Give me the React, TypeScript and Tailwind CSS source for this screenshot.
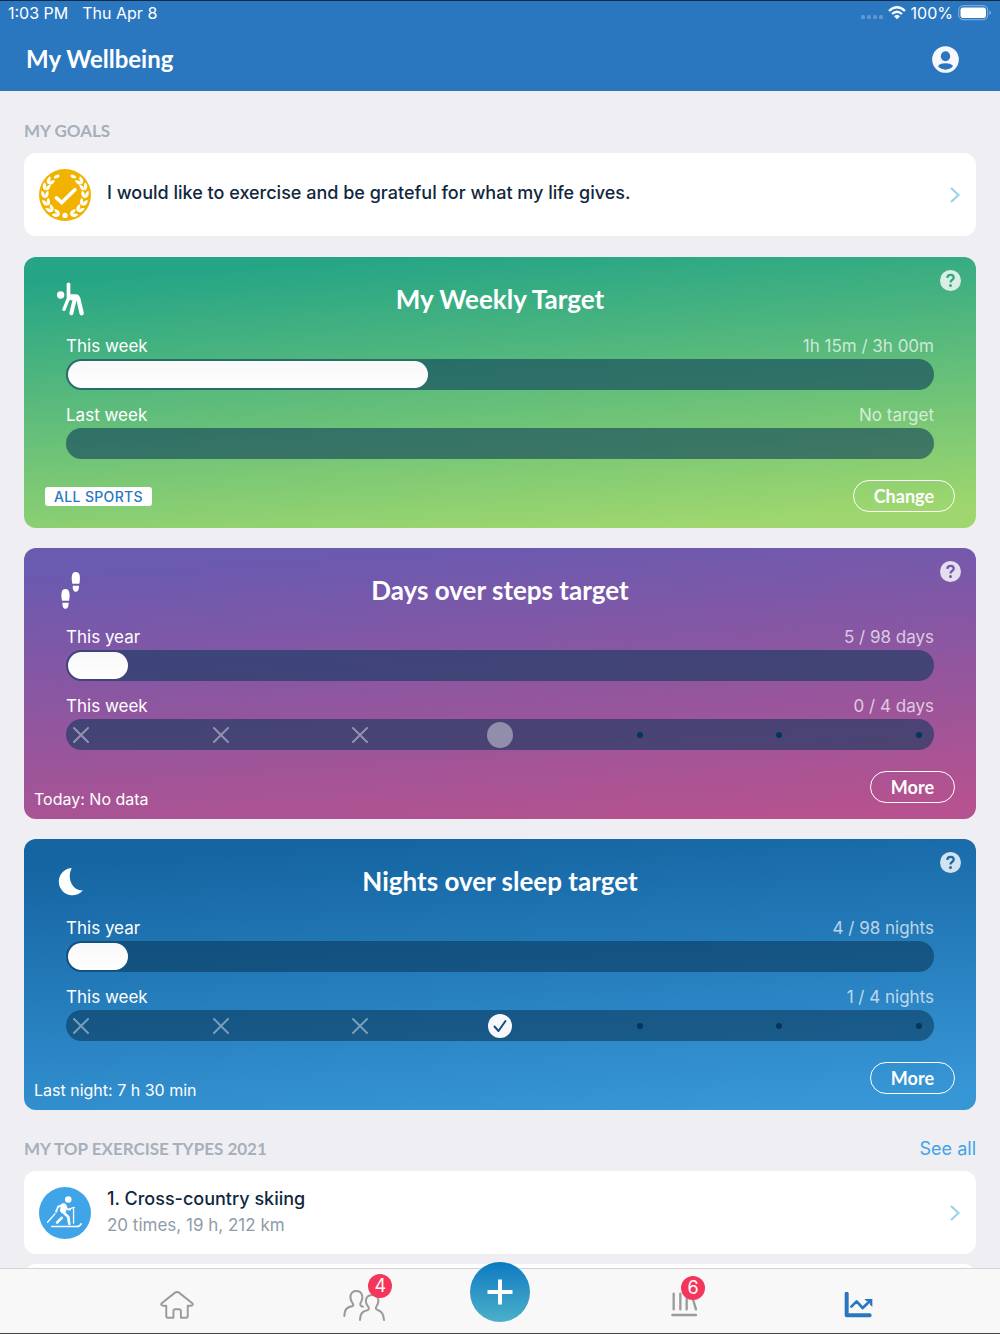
import type { ReactNode } from 'react';

type Day = 'missed' | 'today' | 'done' | 'upcoming';

interface Row {
  label: string;
  value: string;
  progress?: number;
  days?: Day[];
}

interface TargetCardProps {
  title: string;
  icon: ReactNode;
  gradient: string;
  helpColor: string;
  rows: Row[];
  note: ReactNode;
  action: string;
}

function SignalDots() {
  return (
    <svg className="mt-2" width="22" height="5" viewBox="0 0 22 5" fill="#fff" opacity="0.25">
      <rect x="0" y="0" width="4" height="4" rx="1.5" />
      <rect x="6" y="0" width="4" height="4" rx="1.5" />
      <rect x="12" y="0" width="4" height="4" rx="1.5" />
      <rect x="18" y="0" width="4" height="4" rx="1.5" />
    </svg>
  );
}

function WifiIcon() {
  return (
    <svg width="18" height="14" viewBox="0 0 54 42" fill="none" stroke="#fff">
      <path d="M3 15 Q27 -7 51 15" strokeWidth="7" />
      <path d="M12 24 Q27 10 42 24" strokeWidth="7" />
      <path d="M18 31 Q27 22 36 31 L27 40 Z" fill="#fff" stroke="none" />
    </svg>
  );
}

function BatteryIcon() {
  return (
    <svg width="34" height="16" viewBox="0 0 34 16">
      <rect x="0.7" y="0.7" width="29" height="14" rx="4.5" fill="none" stroke="#fff" strokeOpacity="0.45" />
      <rect x="2.5" y="2.5" width="25.5" height="10.5" rx="2.8" fill="#fff" />
      <path d="M31.5 5.2 Q34 7.7 31.5 10.2 Z" fill="#fff" fillOpacity="0.5" />
    </svg>
  );
}

function AccountIcon() {
  return (
    <svg width="27" height="27" viewBox="0 0 81 81">
      <circle cx="40.5" cy="40.5" r="40" fill="#f8f8fc" />
      <ellipse cx="40.5" cy="31" rx="14" ry="15" fill="#2a77c0" />
      <path d="M18 61 Q22 52 40.5 52 Q59 52 63 61 Q54 71 40.5 71 Q27 71 18 61 Z" fill="#2a77c0" />
    </svg>
  );
}

function LaurelHalf() {
  const pairs = [
    [91, 180, 42],
    [79, 197, 22],
    [75, 220, 0],
    [80, 244, -22],
    [91, 264, -42],
    [110, 278, -65],
  ];
  return (
    <g>
      <ellipse cx="111" cy="166" rx="9" ry="5" transform="rotate(-22 111 166)" />
      {pairs.map(([x, y, angle]) => (
        <g key={y} transform={`translate(${x} ${y}) rotate(${angle})`}>
          <path d="M0 11 C-11 9 -13 -1 -10 -11 C-2 -8 1 0 0 11 Z" />
          <path d="M0 11 C11 9 13 -1 10 -11 C2 -8 -1 0 0 11 Z" />
        </g>
      ))}
    </g>
  );
}

function GoalIcon() {
  return (
    <svg className="size-[52px] shrink-0" viewBox="57 143 158 158" fill="#fff">
      <circle cx="136" cy="222" r="79" fill="#f2b200" />
      <LaurelHalf />
      <g transform="translate(272 0) scale(-1 1)">
        <LaurelHalf />
      </g>
      <circle cx="136" cy="284" r="8" />
      <path d="M110 231 L126 245 L166 206" fill="none" stroke="#fff" strokeWidth="11" strokeLinecap="round" />
    </svg>
  );
}

function SkiIcon() {
  return (
    <svg className="size-[52px] shrink-0" viewBox="57 168 158 158" fill="none" stroke="#fff" strokeLinecap="round" strokeLinejoin="round">
      <circle cx="136" cy="247" r="79" fill="#3fa4e8" stroke="none" />
      <circle cx="146" cy="206" r="10" fill="#fff" stroke="none" />
      <path d="M128 223 L115 228 L109 243" strokeWidth="6" />
      <path d="M137 224 L143 236 L152 237" strokeWidth="5" />
      <path d="M126 220 Q134 216 139 222 L138 243 L126 246 Q120 243 123 234 Z" fill="#fff" strokeWidth="3" />
      <path d="M130 244 L146 259 L149 280" strokeWidth="8" />
      <path d="M126 262 L112 276" strokeWidth="8" />
      <path d="M106 249 L83 275" strokeWidth="4" />
      <path d="M147 235 L164 230 M162 231 V278" strokeWidth="4" />
      <path d="M96 288 H172 Q181 288 185 280" strokeWidth="5" />
    </svg>
  );
}

function StretchIcon() {
  return (
    <svg className="h-9 w-[30px]" viewBox="108 92 90 108" fill="none" stroke="#fff" strokeLinecap="round" strokeLinejoin="round">
      <circle cx="122" cy="134" r="11" fill="#fff" stroke="none" />
      <path d="M145.5 102 V140" strokeWidth="11" />
      <path d="M146 142 L132 177" strokeWidth="10" />
      <path d="M147 138 H167 Q173 138 175 146 L185 189" strokeWidth="13" />
      <path d="M165 144 L154 189" strokeWidth="12" />
      <path d="M144 134 H170 L173 150 H146 Z" fill="#fff" stroke="none" />
    </svg>
  );
}

function StepsIcon() {
  return (
    <svg className="h-9 w-[30px] overflow-visible" viewBox="108 96 90 108" fill="#fff">
      <path d="M157 131 C153 110 155 96 167 96 C180 96 182 110 178 131 Z" />
      <path d="M158 137 H177 C177 149 174 155 167 155 C161 155 158 149 158 137 Z" />
      <path d="M126 182 C122 161 124 147 136 147 C149 147 151 161 147 182 Z" />
      <path d="M127 188 H146 C146 200 143 206 136 206 C130 206 127 200 127 188 Z" />
    </svg>
  );
}

function MoonIcon() {
  return (
    <svg className="h-9 w-[30px]" viewBox="106 98 90 108" fill="#fff">
      <path d="M153 113 A41 41 0 1 0 187 180 C160 184 136 150 153 113 Z" />
    </svg>
  );
}

function Chevron() {
  return (
    <svg className="shrink-0" width="12" height="18" viewBox="0 0 12 18" fill="none" stroke="#9fd0f2" strokeWidth="2.2">
      <path d="M2 2 L9.5 9 L2 16" />
    </svg>
  );
}

function DayMark({ day }: { day: Day }) {
  if (day === 'missed') {
    return (
      <svg width="16" height="16" viewBox="0 0 16 16" stroke="#fff" strokeOpacity="0.42" strokeWidth="2" strokeLinecap="round">
        <path d="M1 1 L15 15 M15 1 L1 15" />
      </svg>
    );
  }
  if (day === 'today') {
    return <span className="size-[26px] rounded-full bg-white/40" />;
  }
  if (day === 'done') {
    return (
      <svg width="24" height="24" viewBox="0 0 24 24">
        <circle cx="12" cy="12" r="12" fill="#f8f8fc" />
        <path d="M6.5 12.5 L10.5 17 L17.5 7" fill="none" stroke="#12507f" strokeWidth="2" strokeLinecap="round" strokeLinejoin="round" />
      </svg>
    );
  }
  return <span className="size-[6px] rounded-full bg-[#04365a]" />;
}

function TargetRow({ label, value, progress, days }: Row) {
  return (
    <div>
      <div className="flex justify-between text-[17px] leading-6">
        <span>{label}</span>
        <span className="text-white/70">{value}</span>
      </div>
      <div className="mt-px flex h-[31px] items-center rounded-full bg-[#093758]/57">
        {progress !== undefined && (
          <div className="h-full w-full p-[2px]">
            <div
              className="h-full min-w-15 rounded-full bg-linear-to-b from-[#f8f8f8] to-white"
              style={{ width: `${progress}%` }}
            />
          </div>
        )}
        {days && (
          <div className="flex w-full justify-between">
            {days.map((day, i) => (
              <span key={i} className="flex w-[30px] items-center justify-center">
                <DayMark day={day} />
              </span>
            ))}
          </div>
        )}
      </div>
    </div>
  );
}

function TargetCard({ title, icon, gradient, helpColor, rows, note, action }: TargetCardProps) {
  return (
    <section className={`relative rounded-xl pt-6 pb-[11px] text-white ${gradient}`}>
      <div className="grid h-9 grid-cols-[30px_1fr_30px] items-center px-8">
        {icon}
        <h2 className="text-center font-[Lato,sans-serif] text-[26px] leading-9 font-bold">{title}</h2>
      </div>
      <button
        type="button"
        aria-label="Help"
        className={`absolute top-[13px] right-[15px] size-[21px] rounded-full bg-white/80 ${helpColor}`}
      >
        <svg width="21" height="21" viewBox="0 0 21 21" fill="none">
          <path
            d="M7.3 7.8 Q7.5 4.9 10.6 4.9 Q13.7 4.9 13.7 7.6 Q13.7 9 12 10 Q10.5 10.9 10.5 12.6"
            stroke="currentColor"
            strokeWidth="2.3"
          />
          <circle cx="10.5" cy="15.5" r="1.5" fill="currentColor" />
        </svg>
      </button>
      <div className="mt-[17px] flex flex-col gap-[13px] px-[42px]">
        {rows.map((row, i) => (
          <TargetRow key={i} {...row} />
        ))}
      </div>
      <div className="mt-[21px] flex h-[37px] justify-between pr-[21px] pl-[10px]">
        {note}
        <button
          type="button"
          className="h-8 rounded-full border border-white px-5 font-[Lato,sans-serif] text-[18px] leading-6 font-bold"
        >
          {action}
        </button>
      </div>
    </section>
  );
}

function ListCard({ icon, title, detail }: { icon: ReactNode; title: string; detail?: string }) {
  return (
    <a href="#" className="flex min-h-[83px] items-center gap-4 rounded-xl bg-white px-[15px]">
      {icon}
      <span className={`flex-1 ${detail ? '' : 'pb-1'}`}>
        <span className="block text-[18px] leading-6 font-medium text-[#10273d]">{title}</span>
        {detail && <span className="block text-[17px] leading-7 text-[#8f9ba6]">{detail}</span>}
      </span>
      <Chevron />
    </a>
  );
}

function Badge({ count }: { count: number }) {
  return (
    <span className="absolute -top-4 right-[-7px] flex size-6 items-center justify-center rounded-full bg-[#f4365a] text-[18px] leading-6 text-white">
      {count}
    </span>
  );
}

function TabBar() {
  return (
    <nav className="z-10 flex h-[66px] shrink-0 border-t border-b border-t-[#d3d3d6] border-b-[#444] bg-[#f8f8f8]">
      <div className="flex-1">
        <div className="flex h-full items-center justify-between pt-2 pr-[18%] pl-[34%]">
          <a href="#" aria-label="Home">
            <svg width="34" height="28" viewBox="416 485 104 86" fill="none" stroke="#9b9b9b" strokeWidth="6" strokeLinejoin="round" strokeLinecap="round">
              <path d="M435 530 H424 Q416 527 422 522 L462 490 Q468 486 474 490 L514 522 Q520 527 512 530 H501 V562 Q501 567 496 567 H480 V547 Q480 541 474 541 H463 Q457 541 457 547 V567 H440 Q435 567 435 562 Z" />
            </svg>
          </a>
          <a href="#" aria-label="Friends" className="relative">
            <svg width="42" height="31" viewBox="39 119 126 93" fill="none" stroke="#9b9b9b" strokeWidth="6" strokeLinejoin="round" strokeLinecap="round">
              <path d="M43 197 C44 177 49 171 68 167 C71 164 70 160 66 156 C56 140 62 122 79 122 C96 122 102 140 92 157 C89 163 91 167 99 169" />
              <path d="M90 209 C91 188 98 182 114 179 C118 176 117 171 113 167 C102 151 109 134 127 134 C145 134 150 151 140 167 C136 173 137 177 143 179 C156 183 160 191 162 209" />
            </svg>
            <Badge count={4} />
          </a>
        </div>
      </div>
      <button
        type="button"
        aria-label="Add"
        className="-mt-[7px] flex size-15 items-center justify-center rounded-full bg-linear-to-b from-[#077ac2] to-[#4bb0c8]"
      >
        <svg width="26" height="26" viewBox="0 0 26 26" stroke="#fff" strokeWidth="4">
          <path d="M13 0.5 V25.5 M0.5 13 H25.5" />
        </svg>
      </button>
      <div className="flex-1">
        <div className="flex h-full items-center justify-between pt-2 pr-[27%] pl-[30%]">
          <a href="#" aria-label="Library" className="relative">
            <svg width="27" height="26" viewBox="95 130 81 78" fill="none" stroke="#9b9b9b" strokeWidth="7" strokeLinecap="round">
              <path d="M103 135 V182 M123 135 V182 M142 135 V182 M157 139 L170 182 M99 199 H170" />
            </svg>
            <Badge count={6} />
          </a>
          <a href="#" aria-label="Statistics">
            <svg width="29" height="26" viewBox="610 126 87 78" fill="none" stroke="#2a77c0" strokeLinejoin="round">
              <path d="M618 131 V196 H687" strokeWidth="12" strokeLinecap="round" />
              <path d="M632 170 L648 154 L666 174 L688 153" strokeWidth="8" strokeLinecap="round" />
              <path d="M671 147 H695 V171 L688 164 V154 H678 Z" fill="#2a77c0" stroke="none" />
            </svg>
          </a>
        </div>
      </div>
    </nav>
  );
}

export default function App() {
  return (
    <div className="flex h-dvh flex-col overflow-hidden bg-[#efeef3] font-[Inter,sans-serif]">
      <header className="shrink-0 border-t border-t-[#0c2a48] bg-[#2a77c0] pb-3 text-white">
        <div className="flex h-6 items-center justify-between px-2 text-[16px]">
          <div className="flex gap-[14px]">
            <span>1:03 PM</span>
            <span>Thu Apr 8</span>
          </div>
          <div className="flex items-center gap-[5px]">
            <SignalDots />
            <WifiIcon />
            <span>100%</span>
            <BatteryIcon />
          </div>
        </div>
        <div className="mt-[14px] flex h-10 items-center justify-between pr-[41px] pl-[26px]">
          <h1 className="font-[Lato,sans-serif] text-[24px] leading-8 font-bold">My Wellbeing</h1>
          <button type="button" aria-label="Account">
            <AccountIcon />
          </button>
        </div>
      </header>

      <main className="flex-1 overflow-y-auto px-6 [scrollbar-width:none]">
        <h2 className="mt-7 mb-[10px] font-[Lato,sans-serif] text-[17px] leading-6 font-bold text-[#a5b0ba]">MY GOALS</h2>
        <ListCard icon={<GoalIcon />} title="I would like to exercise and be grateful for what my life gives." />

        <div className="mt-[21px] flex flex-col gap-5">
          <TargetCard
            title="My Weekly Target"
            icon={<StretchIcon />}
            gradient="bg-[linear-gradient(176deg,#26a586_8%,#9fd76e_94%)]"
            helpColor="text-[#35a884]"
            rows={[
              { label: 'This week', value: '1h 15m / 3h 00m', progress: 41.7 },
              { label: 'Last week', value: 'No target' },
            ]}
            note={
              <span className="flex h-8 items-center pl-[11px]">
                <span className="rounded-[3px] bg-white px-[9px] text-[14px] leading-[19px] font-medium tracking-wide text-[#2a77c0]">ALL SPORTS</span>
              </span>
            }
            action="Change"
          />
          <TargetCard
            title="Days over steps target"
            icon={<StepsIcon />}
            gradient="bg-[linear-gradient(176deg,#6a5ab0_8%,#b5528f_94%)]"
            helpColor="text-[#7259ae]"
            rows={[
              { label: 'This year', value: '5 / 98 days', progress: 5.1 },
              {
                label: 'This week',
                value: '0 / 4 days',
                days: ['missed', 'missed', 'missed', 'today', 'upcoming', 'upcoming', 'upcoming'],
              },
            ]}
            note={<span className="self-end text-[16px] leading-[18px]">Today: No data</span>}
            action="More"
          />
          <TargetCard
            title="Nights over sleep target"
            icon={<MoonIcon />}
            gradient="bg-[linear-gradient(176deg,#1565a2_8%,#3796d6_94%)]"
            helpColor="text-[#1a6aa8]"
            rows={[
              { label: 'This year', value: '4 / 98 nights', progress: 4.1 },
              {
                label: 'This week',
                value: '1 / 4 nights',
                days: ['missed', 'missed', 'missed', 'done', 'upcoming', 'upcoming', 'upcoming'],
              },
            ]}
            note={<span className="self-end text-[16px] leading-[18px]">Last night: 7 h 30 min</span>}
            action="More"
          />
        </div>

        <div className="mt-[27px] mb-[10px] flex items-center justify-between leading-6">
          <h2 className="font-[Lato,sans-serif] text-[17px] font-bold text-[#a5b0ba]">MY TOP EXERCISE TYPES 2021</h2>
          <a href="#" className="text-[18px] text-[#3fa4e8]">See all</a>
        </div>
        <div className="flex flex-col gap-[10px]">
          <ListCard icon={<SkiIcon />} title="1. Cross-country skiing" detail="20 times, 19 h, 212 km" />
          <div className="h-[83px] rounded-xl bg-white" />
        </div>
      </main>

      <TabBar />
    </div>
  );
}
